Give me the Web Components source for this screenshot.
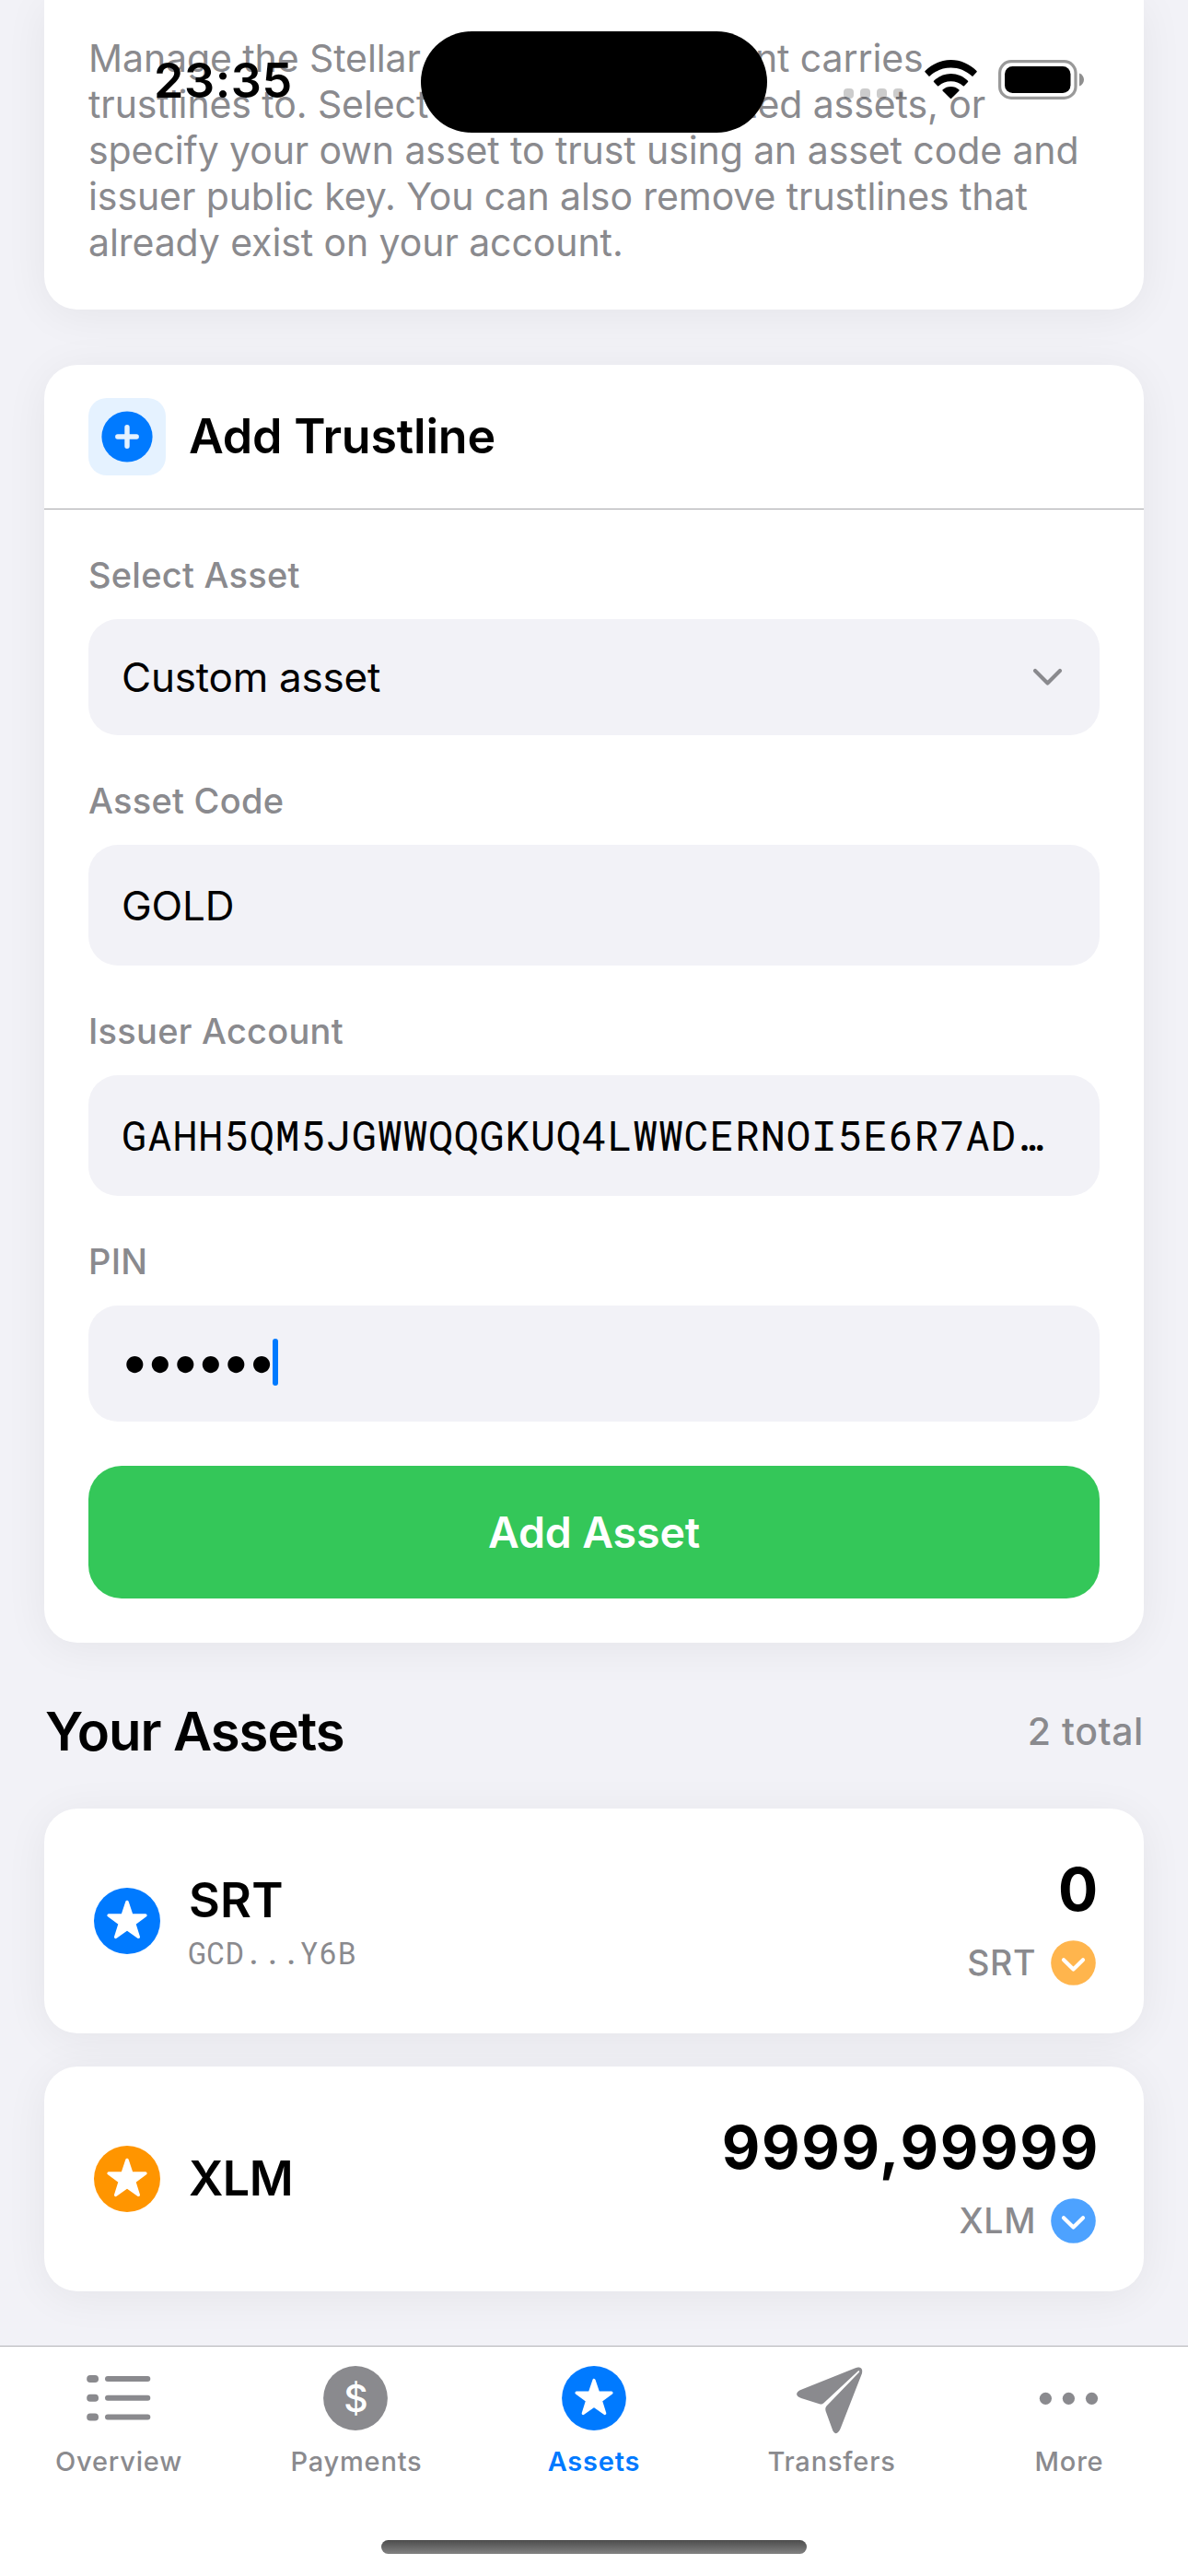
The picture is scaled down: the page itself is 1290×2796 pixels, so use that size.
<!DOCTYPE html>
<html lang="en">
<head>
<meta charset="utf-8">
<title>Assets</title>
<style>
  html, body { margin: 0; padding: 0; }
  body {
    width: 1290px; height: 2796px; overflow: hidden;
    background: #f2f2f7; color: #000;
    font-family: Inter, "Liberation Sans", sans-serif;
    --gray: #8a8a8e; --blue: #007aff; --fill: #f2f2f7;
  }
</style>
</head>
<body>
<assets-screen></assets-screen>
<script>
const define = (name, html, after) => {
  const tpl = document.createElement('template');
  tpl.innerHTML = html;
  customElements.define(name, class extends HTMLElement {
    connectedCallback() {
      if (this.shadowRoot) return;
      this.attachShadow({ mode: 'open' }).appendChild(tpl.content.cloneNode(true));
      if (after) after(this, this.shadowRoot);
    }
  });
};

/* five-pointed star, centred on 0,0 */
const STAR = '<path d="M0 -21L4.82 -6.63L19.97 -6.49L7.8 2.53L12.34 16.99L0 8.2L-12.34 16.99L-7.8 2.53L-19.97 -6.49L-4.82 -6.63Z" fill="#fff" stroke="#fff" stroke-width="3.4" stroke-linejoin="round"/>';

define('status-bar', `
<style>
  :host { position: absolute; inset: 0 0 auto 0; height: 160px; display: flex; align-items: flex-start; box-sizing: border-box; padding-left: 167px; z-index: 5; }
  time { width: 290px; margin-top: 56px; font-size: 52px; line-height: 64px; font-weight: 600; letter-spacing: .6px; }
  .island { width: 376px; height: 110px; margin-top: 34px; border-radius: 55px; background: #000; }
  .cell { display: flex; gap: 7px; margin: 96px 0 0 83px; }
  .cell i { width: 11px; height: 11px; border-radius: 4px; background: rgba(0,0,0,.2); }
  .wifi { margin: 65px 0 0 23px; }
  .bat { margin: 65px 0 0 23px; }
  svg { display: block; flex: none; }
</style>
<time>23:35</time>
<div class="island"></div>
<div class="cell"><i></i><i></i><i></i><i></i></div>
<svg class="wifi" width="57" height="43" viewBox="0 0 57 43">
  <path d="M28.5 0C39 0 49 4.5 56.5 12Q57 12.7 56.5 13.3L52.6 17.6Q52 18.2 51.3 17.6C45 11.7 37 8.5 28.5 8.5C20 8.5 12 11.7 5.7 17.6Q5 18.2 4.4 17.6L.5 13.3Q0 12.7 .5 12C8 4.5 18 0 28.5 0Z"/>
  <path d="M28.5 15C35.5 15 42 17.8 47 22.7Q47.6 23.3 47 24L43 28.2Q42.4 28.8 41.7 28.2C38 25 33.5 23.3 28.5 23.3C23.5 23.3 19 25 15.3 28.2Q14.6 28.8 14 28.2L10 24Q9.4 23.3 10 22.7C15 17.8 21.5 15 28.5 15Z"/>
  <path d="M28.5 29C32 29 35 30.2 37.3 32.3Q38 33 37.3 33.8L29.2 41.7Q28.5 42.3 27.8 41.7L19.7 33.8Q19 33 19.7 32.3C22 30.2 25 29 28.5 29Z"/>
</svg>
<svg class="bat" width="94" height="43" viewBox="0 0 94 43">
  <rect x="1.6" y="1.6" width="82.4" height="39.8" rx="12.5" fill="none" stroke="#999" stroke-width="3.2"/>
  <rect x="7" y="7" width="71.5" height="29" rx="8.5"/>
  <path d="M88 14.5C91 15.6 93 18.2 93 21.5S91 27.4 88 28.500Z" fill="#8f8f8f"/>
</svg>`);

define('surface-card', `
<style>
  :host { display: block; background: #fff; border-radius: 36px; box-shadow: 0 6px 48px rgba(0,0,0,.06); }
  :host([flush]) { border-top-left-radius: 0; border-top-right-radius: 0; }
</style>
<slot></slot>`);

define('intro-text', `
<style>
  :host { display: block; padding: 38px 48px 48px; font-size: 41px; line-height: 50px; letter-spacing: -.09px; color: var(--gray); white-space: nowrap; }
  p { margin: 0; }
  .w { letter-spacing: .75px; }
</style>
<p>Manage the Stellar assets your account carries</p>
<p>trustlines to. Select<span class="w"> from our suggest</span>ed assets, or</p>
<p>specify your own asset to trust using an asset code and</p>
<p>issuer public key. You can also remove trustlines that</p>
<p>already exist on your account.</p>`);

define('card-header', `
<style>
  :host { display: flex; align-items: center; gap: 25px; padding: 36px 48px; border-bottom: 1px solid #a6a6aa; }
  .tile { width: 84px; height: 84px; border-radius: 20px; background: #e5f2ff; display: grid; place-items: center; }
  h2 { margin: 0; font-size: 52px; line-height: 64px; font-weight: 600; letter-spacing: -.21px; }
</style>
<div class="tile"><svg width="56" height="56" viewBox="-28 -28 56 56"><circle r="27.6" fill="#007aff"/><path d="M0 -10.200V10.200M-10.200 0H10.200" stroke="#e5f2ff" stroke-width="5.4" stroke-linecap="round"/></svg></div>
<h2><slot></slot></h2>`);

define('form-field', `
<style>
  :host { display: flex; flex-direction: column; gap: 24px; }
  label { font-size: 38px; line-height: 48px; font-weight: 500; letter-spacing: .25px; color: var(--gray); }
  .box { display: flex; align-items: center; height: 126px; padding: 0 36px; border-radius: 32px; background: var(--fill); font-size: 44px; line-height: 60px; letter-spacing: -.22px; white-space: nowrap; }
  :host([tall]) .box { height: 131px; }
  :host([mono]) .box { font-family: "Roboto Mono", "Liberation Mono", monospace; font-size: 45px; letter-spacing: .75px; padding-bottom: 2px; height: 129px; }
  :host([secure]) .val { font-size: 58px; letter-spacing: -5.1px; margin-left: -2px; padding-bottom: 7px; }
  .caret, svg { display: none; }
  :host([secure]) .caret { display: block; width: 6px; height: 51px; border-radius: 3px; background: var(--blue); margin: 0 0 3px 1px; }
  :host([select]) svg { display: block; margin-left: auto; }
</style>
<label></label>
<div class="box"><span class="val"><slot></slot></span><span class="caret"></span>
<svg width="41" height="24" viewBox="0 0 41 24"><path d="M7 5L20.500 18.600L34 5" fill="none" stroke="#8a8a8e" stroke-width="4.200" stroke-linecap="round" stroke-linejoin="round"/></svg></div>`,
(h, r) => { r.querySelector('label').textContent = h.getAttribute('label'); });

define('primary-button', `
<style>
  :host { display: block; }
  button { display: block; width: 100%; height: 144px; margin: 0; padding: 0; border: 0; border-radius: 36px; background: #34c759; color: #fff; font: 600 46.5px/60px Inter, sans-serif; letter-spacing: -.14px; }
</style>
<button><slot></slot></button>`);

define('section-heading', `
<style>
  :host { display: flex; align-items: center; justify-content: space-between; height: 72px; }
  h2 { margin: 0; font-size: 58px; line-height: 72px; font-weight: 600; letter-spacing: -1.02px; padding-left: 1px; }
  span { font-size: 41px; line-height: 72px; font-weight: 500; letter-spacing: .57px; color: var(--gray); }
</style>
<h2><slot></slot></h2><span><slot name="count"></slot></span>`);

define('asset-row', `
<style>
  :host { display: flex; align-items: center; height: 244px; box-sizing: border-box; padding: 0 48px; }
  .badge { width: 84px; display: grid; place-items: center; margin-right: 25px; }
  .names { display: flex; flex-direction: column; gap: 4px; }
  b { font-size: 52px; line-height: 64px; font-weight: 600; letter-spacing: var(--name-ls, .2px); }
  small { font: 400 33px/40px "Roboto Mono", "Liberation Mono", monospace; letter-spacing: .55px; color: var(--gray); margin-left: -1px; }
  small:empty { display: none; }
  .right { margin-left: auto; display: flex; flex-direction: column; align-items: flex-end; gap: 13px; }
  .amount { font-size: 64px; line-height: 78px; font-weight: 700; letter-spacing: 1.76px; }
  .unit { display: flex; align-items: center; gap: 16px; height: 55px; padding-right: 4px; font-size: 37.5px; font-weight: 500; letter-spacing: .6px; color: var(--gray); }
  svg { display: block; }
</style>
<div class="badge"><svg width="72" height="72" viewBox="-36 -36 72 72"><circle id="disc" r="36"/><g transform="translate(0 .4)">${STAR}</g></svg></div>
<div class="names"><b></b><small></small></div>
<div class="right">
  <span class="amount"></span>
  <div class="unit"><span id="u"></span><svg width="49" height="49" viewBox="-24.500 -24.500 49 49"><circle id="chip" r="24.300"/><path d="M-10.500 -3.200L0 7L10.500 -3.200" fill="none" stroke="#fff" stroke-width="4.200" stroke-linecap="round" stroke-linejoin="round"/></svg></div>
</div>`,
(h, r) => {
  const a = n => h.getAttribute(n) || '';
  r.querySelector('b').textContent = a('code');
  r.querySelector('small').textContent = a('issuer');
  r.querySelector('.amount').textContent = a('amount');
  r.querySelector('#u').textContent = a('code');
  r.querySelector('#disc').setAttribute('fill', a('disc'));
  r.querySelector('#chip').setAttribute('fill', a('chip'));
});

const ICONS = {
  list: '<g fill="currentColor"><rect x="5.200" y="15" width="12.800" height="8" rx="3.800"/><rect x="5.200" y="35.800" width="12.800" height="8" rx="3.800"/><rect x="5.200" y="56.500" width="12.800" height="8" rx="3.800"/><rect x="25" y="16" width="49.300" height="6" rx="3"/><rect x="25" y="36.800" width="49.300" height="6" rx="3"/><rect x="25" y="57.500" width="49.300" height="6" rx="3"/></g>',
  dollar: '<circle cx="39" cy="40" r="34.900" fill="currentColor"/><text x="39.400" y="55" text-anchor="middle" font-family="Inter, sans-serif" font-size="41" font-weight="500" letter-spacing="0" fill="#fff">$</text>',
  star: `<circle cx="40" cy="40" r="34.900" fill="currentColor"/><g transform="translate(40 40.400) scale(.95)">${STAR}</g>`,
  plane: '<path fill="currentColor" d="M7 30.700L65.800 7.300C70 5.500 74.500 7 73 13L50 72C47 80 42.500 80 40.500 73L33.600 54C33 51.500 33.300 50.200 34.500 48.600L69.800 12C71 10.500 69.800 9.600 68.500 10.700L32 44.800C30.500 46.600 28.500 46.900 26.800 46.200L7 40C.5 37.500 .5 33.200 7 30.700Z"/>',
  more: '<g fill="currentColor"><circle cx="14.400" cy="40.300" r="6.600"/><circle cx="39.400" cy="40.300" r="6.600"/><circle cx="64.500" cy="40.300" r="6.600"/></g>'
};
define('tab-item', `
<style>
  :host { flex: 1; display: flex; flex-direction: column; align-items: center; gap: 11px; color: var(--gray); font-size: 29px; line-height: 36px; font-weight: 500; letter-spacing: .8px; }
  :host([active]) { color: var(--blue); font-weight: 600; }
  svg { display: block; }
</style>
<svg width="80" height="80" viewBox="0 0 80 80"></svg><span><slot></slot></span>`,
(h, r) => { r.querySelector('svg').innerHTML = ICONS[h.getAttribute('icon')]; });

define('tab-bar', `
<style>
  :host { display: flex; flex-direction: column; align-items: center; height: 250px; box-sizing: border-box; background: #fff; border-top: 1px solid #b3b3b7; position: relative; }
  nav { display: flex; width: 100%; height: 210px; box-sizing: border-box; padding-top: 16px; }
  .home { width: 462px; height: 15px; border-radius: 8px; background: linear-gradient(#4c4c4c, #828282); }
</style>
<nav>
  <tab-item icon="list">Overview</tab-item>
  <tab-item icon="dollar">Payments</tab-item>
  <tab-item icon="star" active>Assets</tab-item>
  <tab-item icon="plane">Transfers</tab-item>
  <tab-item icon="more">More</tab-item>
</nav>
<div class="home"></div>`);

define('assets-screen', `
<style>
  :host { display: flex; flex-direction: column; height: 2796px; position: relative; }
  main { flex: 1; display: flex; flex-direction: column; padding: 0 48px; }
  .form { margin-top: 60px; }
  .fields { display: flex; flex-direction: column; padding: 47px 48px 48px; gap: 47px; }
  primary-button { margin-top: 1px; }
  section-heading { margin: 60px 0 48px; }
  .list { display: flex; flex-direction: column; gap: 36px; }
</style>
<status-bar></status-bar>
<main>
  <surface-card flush><intro-text></intro-text></surface-card>
  <surface-card class="form">
    <card-header>Add Trustline</card-header>
    <div class="fields">
      <form-field label="Select Asset" select>Custom asset</form-field>
      <form-field label="Asset Code" tall>GOLD</form-field>
      <form-field label="Issuer Account" mono>GAHH5QM5JGWWQQGKUQ4LWWCERNOI5E6R7AD…</form-field>
      <form-field label="PIN" secure>••••••</form-field>
      <primary-button>Add Asset</primary-button>
    </div>
  </surface-card>
  <section-heading>Your Assets<span slot="count">2 total</span></section-heading>
  <div class="list">
    <surface-card><asset-row code="SRT" issuer="GCD...Y6B" amount="0" disc="#007aff" chip="#ffb54d"></asset-row></surface-card>
    <surface-card><asset-row code="XLM" amount="9999,99999" disc="#ff9500" chip="#4da2ff" style="--name-ls:-.6px"></asset-row></surface-card>
  </div>
</main>
<tab-bar></tab-bar>`);
</script>
</body>
</html>
